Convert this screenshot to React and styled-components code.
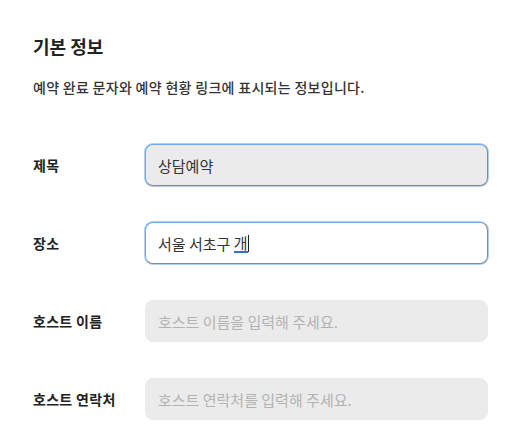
import React from "react";
import styled, { createGlobalStyle } from "styled-components";

const GlobalStyle = createGlobalStyle`
  body {
    margin: 0;
    background: #fff;
    font-family: "Noto Sans CJK KR", "Noto Sans", sans-serif;
  }
`;

const Section = styled.section`
  padding: 33px 32px 0 33px;
  width: 520px;
  box-sizing: border-box;
`;

const Title = styled.h2`
  margin: 0;
  font-size: 18px;
  line-height: 26px;
  font-weight: 700;
  color: #222;
`;

const Desc = styled.p`
  margin: 18px 0 47px;
  font-size: 14px;
  letter-spacing: 0.3px;
  line-height: 20px;
  font-weight: 500;
  color: #333;
`;

const Rows = styled.div`
  display: flex;
  flex-direction: column;
  gap: 36px;
`;

const Row = styled.div`
  display: grid;
  grid-template-columns: 112px 343px;
  align-items: center;
`;

const Label = styled.label`
  font-size: 14px;
  letter-spacing: 0.3px;
  font-weight: 700;
  color: #222;
`;

const fieldBase = `
  box-sizing: border-box;
  width: 343px;
  height: 42px;
  padding: 0 12px;
  border-radius: 8px;
  font-family: "Noto Sans CJK KR", "Noto Sans", sans-serif;
  font-size: 15px;
  color: #333;
  outline: none;
`;

const Input = styled.input`
  ${fieldBase}
  background: #ebebeb;
  border: 1px solid ${(p) => (p.$active ? "#8a8a8a" : "#ebebeb")};
  ${(p) =>
    p.$active &&
    `border-top-color: #6ea9ea; border-left-color: #6ea9ea; box-shadow: 0 0 0 1px rgba(110,169,234,0.55);`}
  &::placeholder {
    color: #b3b3b3;
  }
`;

const FieldBox = styled.div`
  ${fieldBase}
  display: flex;
  align-items: center;
  background: #fff;
  border: 1px solid #8a8a8a;
  border-top-color: #6ea9ea;
  border-left-color: #6ea9ea;
  box-shadow: 0 0 0 1px rgba(110, 169, 234, 0.55);
  white-space: pre;
`;

const Composing = styled.span`
  border-bottom: 2px solid #3a6fd0;
  line-height: 17px;
`;

const Caret = styled.span`
  display: inline-block;
  width: 1px;
  height: 17px;
  background: #222;
`;

export default function App() {
  return (
    <>
      <GlobalStyle />
      <Section>
        <Title>기본 정보</Title>
        <Desc>예약 완료 문자와 예약 현황 링크에 표시되는 정보입니다.</Desc>
        <Rows>
          <Row>
            <Label>제목</Label>
            <Input $active readOnly value="상담예약" />
          </Row>
          <Row>
            <Label>장소</Label>
            <FieldBox>
              서울 서초구 <Composing>개</Composing>
              <Caret />
            </FieldBox>
          </Row>
          <Row>
            <Label>호스트 이름</Label>
            <Input placeholder="호스트 이름을 입력해 주세요." />
          </Row>
          <Row>
            <Label>호스트 연락처</Label>
            <Input placeholder="호스트 연락처를 입력해 주세요." />
          </Row>
        </Rows>
      </Section>
    </>
  );
}
